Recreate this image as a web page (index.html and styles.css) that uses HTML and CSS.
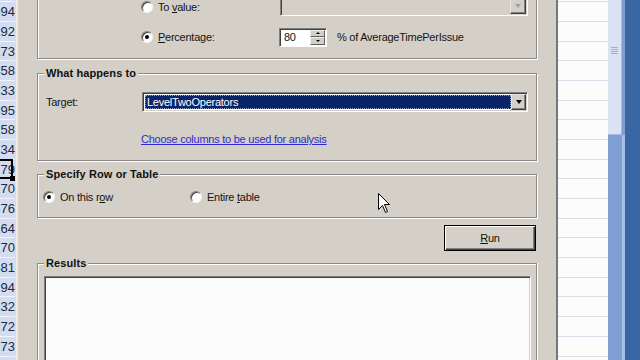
FILE: index.html
```html
<!DOCTYPE html>
<html>
<head>
<meta charset="utf-8">
<link rel="stylesheet" href="styles.css">
</head>
<body>
<div class="screen">
  <div class="rows">
    <div class="rcell first">1260</div>
    <div class="rcell">394</div>
    <div class="rcell">292</div>
    <div class="rcell">173</div>
    <div class="rcell">458</div>
    <div class="rcell">233</div>
    <div class="rcell">395</div>
    <div class="rcell">258</div>
    <div class="rcell">134</div>
    <div class="rcell active">179<span class="active-box"></span><span class="fill-handle"></span></div>
    <div class="rcell">270</div>
    <div class="rcell">376</div>
    <div class="rcell">164</div>
    <div class="rcell">270</div>
    <div class="rcell">381</div>
    <div class="rcell">294</div>
    <div class="rcell">132</div>
    <div class="rcell">272</div>
    <div class="rcell">173</div>
  </div>

  <div class="dialog">
    <div class="group group-top">
      <div class="opt-row">
        <label class="radio-label"><span class="radio"></span><span>To <u>v</u>alue:</span></label>
        <div class="combo disabled"><div class="combo-field"></div><span class="drop-btn"><span class="arrow gray"></span></span></div>
      </div>
      <div class="opt-row second">
        <label class="radio-label"><span class="radio checked"></span><span><u>P</u>ercentage:</span></label>
        <div class="spinner"><span class="spin-val">80</span><span class="spin-btns"><span class="spin-btn"><span class="tri up"></span></span><span class="spin-btn"><span class="tri down"></span></span></span></div>
        <span class="spin-text">% of AverageTimePerIssue</span>
      </div>
    </div>

    <div class="group group-what">
      <span class="legend">What happens to</span>
      <div class="target-row">
        <span class="target-label">Tar<u>g</u>et:</span>
        <div class="combo target"><div class="combo-field"><span class="selected">LevelTwoOperators</span></div><span class="drop-btn"><span class="arrow"></span></span></div>
      </div>
      <a class="link" href="#">Choose columns to be used for analysis</a>
    </div>

    <div class="group group-specify">
      <span class="legend">Specify Row or Table</span>
      <div class="spec-row">
        <label class="radio-label spec-first"><span class="radio checked"></span><span>On this r<u>o</u>w</span></label>
        <label class="radio-label"><span class="radio"></span><span>Entire <u>t</u>able</span></label>
      </div>
    </div>

    <div class="run-row"><button class="btn"><u>R</u>un</button></div>

    <div class="group group-results">
      <span class="legend">Results</span>
      <div class="results-box"></div>
    </div>
  </div>

  <div class="cells">
    <div class="ccell first"></div>
    <div class="ccell"></div><div class="ccell"></div><div class="ccell"></div><div class="ccell"></div>
    <div class="ccell"></div><div class="ccell"></div><div class="ccell"></div><div class="ccell"></div>
    <div class="ccell"></div><div class="ccell"></div><div class="ccell"></div><div class="ccell"></div>
    <div class="ccell"></div><div class="ccell"></div><div class="ccell"></div><div class="ccell"></div>
    <div class="ccell"></div><div class="ccell"></div>
  </div>

  <div class="vscroll">
    <div class="thumb"><span class="grip"></span></div>
    <div class="track"></div>
  </div>
  <div class="desk"></div>

  <svg class="cursor" width="13" height="21" viewBox="0 0 13 21">
    <path d="M0.5 0.5 L0.5 16.5 L4.5 12.5 L7.5 19.5 L9.5 18.5 L6.5 11.5 L11.5 11.5 Z" fill="#fff" stroke="#000" stroke-width="1"/>
  </svg>
</div>
</body>
</html>
```

FILE: styles.css
```css
html, body {
  margin: 0;
  padding: 0;
}
body {
  width: 640px;
  height: 360px;
  overflow: hidden;
  font-family: "Liberation Sans", Arial, sans-serif;
  font-size: 11px;
  letter-spacing: -0.25px;
  color: #141414;
  background: #d4d0c8;
}
.screen {
  display: grid;
  grid-template-columns: 16px 542px 50px 17px 15px;
  grid-template-rows: 360px;
  width: 640px;
  height: 360px;
  position: relative;
  overflow: hidden;
}

/* spreadsheet row column at left */
.rows {
  overflow: hidden;
  background: #d3ddef;
  letter-spacing: 0;
}
.rcell {
  position: relative;
  width: 40px;
  margin-left: -25px;
  height: 19.7px;
  box-sizing: border-box;
  border-bottom: 1px solid #f1f4fa;
  text-align: right;
  font-size: 13px;
  line-height: 19px;
  color: #1c2840;
  white-space: nowrap;
}
.rcell.first { margin-top: -17.55px; }
.active-box {
  position: absolute;
  left: 0;
  right: 2px;
  top: -1px;
  bottom: -1px;
  border: 2px solid #000;
}
.fill-handle {
  position: absolute;
  right: 0;
  bottom: -3px;
  width: 5px;
  height: 5px;
  background: #000;
}

/* dialog */
.dialog {
  box-sizing: border-box;
  background: #d4d0c8;
  border-left: 2px solid #ecebe6;
  border-right: 2px solid #777;
  padding-left: 19px;
  overflow: hidden;
}
.group {
  position: relative;
  width: 500px;
  box-sizing: border-box;
  border: 1px solid #8a8a8a;
  box-shadow: inset 1px 1px 0 #fff, 1px 1px 0 #fff;
}
.legend {
  position: absolute;
  top: -7px;
  left: 6px;
  padding: 0 2px 0 2px;
  background: #d4d0c8;
  font-weight: bold;
  letter-spacing: 0.1px;
  line-height: 13px;
  color: #111;
}

.group-top {
  margin-top: -40px;
  padding: 36px 0 11px 0;
}
.opt-row {
  display: flex;
  align-items: center;
  height: 20px;
  padding-left: 103px;
}
.opt-row.second { margin-top: 10px; }
.radio-label {
  display: flex;
  align-items: center;
  gap: 5px;
  width: 139px;
  flex: none;
}
.radio {
  position: relative;
  width: 12px;
  height: 12px;
  box-sizing: border-box;
  border-radius: 50%;
  background: #fff;
  border: 1px solid;
  border-color: #808080 #f4f4f4 #f4f4f4 #808080;
  box-shadow: inset 1px 1px 0 #404040;
}
.radio.checked::after {
  content: "";
  position: absolute;
  left: 3px;
  top: 3px;
  width: 4px;
  height: 4px;
  border-radius: 50%;
  background: #000;
}

.combo {
  position: relative;
  height: 20px;
  box-sizing: border-box;
  border: 1px solid;
  border-color: #808080 #fff #fff #808080;
  box-shadow: inset 1px 1px 0 #404040, inset -1px -1px 0 #d4d0c8;
  display: flex;
  background: #fff;
}
.combo.disabled {
  width: 248px;
  margin-top: -2px;
  background: #d4d0c8;
}
.combo-field {
  flex: 1;
  padding: 2px 0 2px 2px;
  display: flex;
}
.drop-btn {
  width: 16px;
  height: 16px;
  margin: 1px 1px 0 0;
  box-sizing: border-box;
  background: #d4d0c8;
  border: 1px solid;
  border-color: #e8e6e0 #404040 #404040 #e8e6e0;
  box-shadow: inset -1px -1px 0 #808080;
  display: flex;
  align-items: center;
  justify-content: center;
}
.arrow {
  width: 0;
  height: 0;
  border-left: 3.5px solid transparent;
  border-right: 3.5px solid transparent;
  border-top: 4px solid #000;
}
.arrow.gray {
  border-top-color: #a0a0a0;
}

.spinner {
  width: 48px;
  height: 19px;
  margin-left: -1px;
  box-sizing: border-box;
  border: 1px solid;
  border-color: #808080 #fff #fff #808080;
  box-shadow: inset 1px 1px 0 #404040;
  background: #fff;
  display: flex;
  align-items: center;
}
.spin-val {
  flex: 1;
  padding-left: 4px;
}
.spin-btns {
  width: 15px;
  height: 15px;
  margin-right: 1px;
  display: flex;
  flex-direction: column;
}
.spin-btn {
  flex: 1;
  box-sizing: border-box;
  background: #d4d0c8;
  border: 1px solid;
  border-color: #f0f0f0 #606060 #606060 #f0f0f0;
  display: flex;
  align-items: center;
  justify-content: center;
}
.tri {
  width: 0;
  height: 0;
  border-left: 2px solid transparent;
  border-right: 2px solid transparent;
}
.tri.up { border-bottom: 2px solid #000; }
.tri.down { border-top: 2px solid #000; }
.spin-text {
  margin-left: 10px;
  white-space: nowrap;
}

.group-what {
  margin-top: 14px;
  padding: 18px 0 14px 0;
}
.target-row {
  display: flex;
  align-items: center;
  height: 20px;
  padding-left: 8px;
}
.target-label {
  width: 96px;
  flex: none;
}
.combo.target {
  width: 386px;
}
.selected {
  display: block;
  width: 366px;
  height: 14px;
  box-sizing: border-box;
  background: #0a246a;
  color: #fff;
  border: 1px dotted #8c9cc8;
  line-height: 12px;
  padding-left: 1px;
  white-space: nowrap;
}
.link {
  display: block;
  margin: 21px 0 0 103px;
  line-height: 13px;
  color: #2c2cd0;
  text-decoration: underline;
  white-space: nowrap;
}

.group-specify {
  margin-top: 13px;
  padding: 14px 0 12px 5px;
}
.spec-row {
  display: flex;
  align-items: center;
  height: 16px;
}
.radio-label.spec-first {
  width: 147px;
}

.run-row {
  display: flex;
  justify-content: flex-end;
  width: 500px;
  margin-top: 7px;
}
.btn {
  width: 92px;
  height: 26px;
  margin: 0 1px 0 0;
  padding: 0;
  box-sizing: border-box;
  background: #d4d0c8;
  border: 1px solid #000;
  box-shadow: inset 1px 1px 0 #fff, inset -1px -1px 0 #404040, inset -2px -2px 0 #808080;
  font-family: "Liberation Sans", Arial, sans-serif;
  font-size: 11px;
  letter-spacing: -0.25px;
  color: #111;
}

.group-results {
  margin-top: 12px;
  padding: 12px 0 0 6px;
  height: 97px;
  border-bottom: none;
  box-shadow: inset 1px 1px 0 #fff, 1px 0 0 #fff;
}
.results-box {
  width: 487px;
  height: 84px;
  box-sizing: border-box;
  background: #fbfbfb;
  border: 1px solid;
  border-bottom: none;
  border-color: #808080 #fff #fff #808080;
  box-shadow: inset 1px 1px 0 #404040, inset -1px 0 0 #d4d0c8;
}

/* spreadsheet cells at right */
.cells {
  overflow: hidden;
  background: #fcfcfc;
}
.ccell {
  height: 19.7px;
  box-sizing: border-box;
  border-bottom: 1px solid #d8dde7;
}
.ccell.first { margin-top: -17.55px; }

.vscroll {
  display: flex;
  flex-direction: column;
  background: #7f9fd3;
}
.thumb {
  height: 135px;
  flex: none;
  box-sizing: border-box;
  margin-right: 3px;
  background: #dbe3f2;
  border-right: 1px solid #a9bbdc;
  border-bottom: 1px solid #a9bbdc;
  display: flex;
  align-items: center;
  justify-content: center;
  padding-bottom: 34px;
}
.grip {
  display: block;
  width: 7px;
  height: 7px;
  background: repeating-linear-gradient(to bottom, #9fb0cc 0, #9fb0cc 1px, #dbe3f2 1px, #dbe3f2 2px);
}
.track {
  flex: 1;
  border-right: 3px solid #a9c0e6;
}
.desk {
  background: #3a66a4;
}

.cursor {
  position: absolute;
  left: 378px;
  top: 193px;
}
```
